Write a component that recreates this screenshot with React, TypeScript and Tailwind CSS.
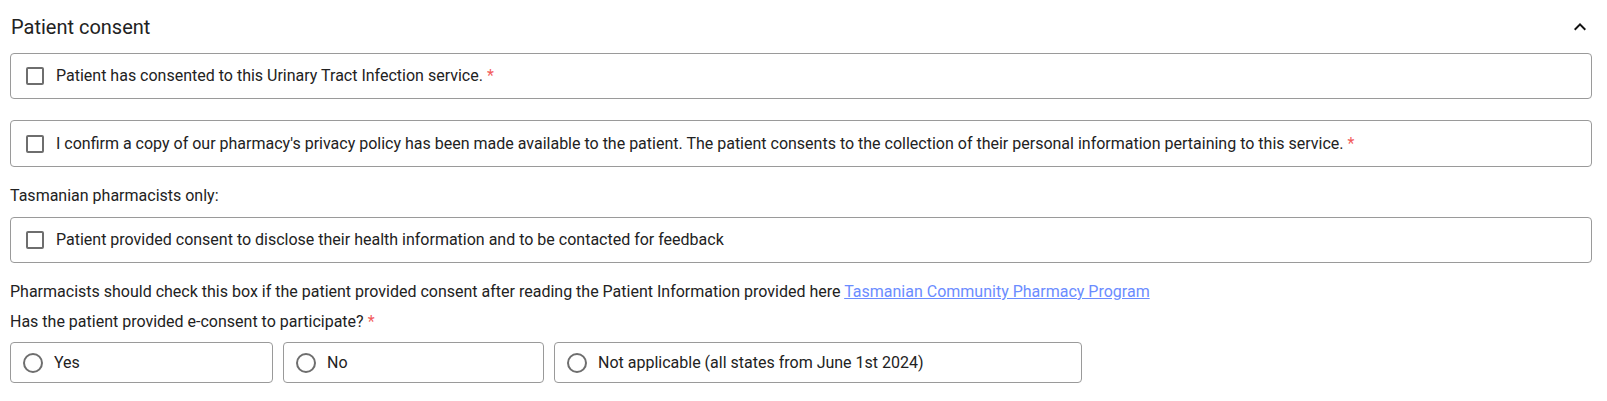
import React from 'react';

const font = { fontFamily: 'Roboto, "Liberation Sans", sans-serif' };

const Req = () => <span className="text-[#f25c5c] ml-[4px]">*</span>;

const CheckRow: React.FC<{ children: React.ReactNode; className?: string }> = ({ children, className }) => (
  <label className={`flex items-center h-[46px] border border-[#9a9a9a] rounded-[4px] pl-[15px] ${className || ''}`}>
    <span className="w-[18px] h-[18px] border-2 border-[#6e6e6e] rounded-[2px] shrink-0" />
    <span className="ml-[12px] text-[16px] text-[#222]">{children}</span>
  </label>
);

const RadioBox: React.FC<{ label: string; width: string }> = ({ label, width }) => (
  <label className={`flex items-center h-[41px] border border-[#9a9a9a] rounded-[4px] pl-[12px] ${width}`}>
    <span className="w-[20px] h-[20px] border-2 border-[#6e6e6e] rounded-full shrink-0" />
    <span className="ml-[11px] text-[16px] text-[#222]">{label}</span>
  </label>
);

export default function App() {
  return (
    <div className="w-[1607px] h-[401px] bg-white pl-[10px] pr-[15px]" style={font}>
      <div className="flex items-center justify-between h-[53px]">
        <h2 className="text-[20px] text-[#222] pl-[1px]">Patient consent</h2>
        <svg width="24" height="24" viewBox="0 0 24 24" className="text-[#111]">
          <path fill="currentColor" d="M12 8l-6 6 1.41 1.41L12 10.83l4.59 4.58L18 14z" />
        </svg>
      </div>

      <CheckRow>
        Patient has consented to this Urinary Tract Infection service.
        <Req />
      </CheckRow>

      <CheckRow className="mt-[21px] h-[47px]">
        I confirm a copy of our pharmacy's privacy policy has been made available to the patient. The patient consents to the collection of their personal information pertaining to this service.
        <Req />
      </CheckRow>

      <p className="mt-[19px] h-[20px] leading-[20px] text-[16px] text-[#222]">Tasmanian pharmacists only:</p>

      <CheckRow className="mt-[11px]">
        Patient provided consent to disclose their health information and to be contacted for feedback
      </CheckRow>

      <p className="mt-[19px] h-[20px] leading-[20px] text-[16px] text-[#222]">
        Pharmacists should check this box if the patient provided consent after reading the Patient Information provided here{' '}
        <a href="#" className="text-[#6b8cff] underline">Tasmanian Community Pharmacy Program</a>
      </p>
      <p className="mt-[10px] h-[20px] leading-[20px] text-[16px] text-[#222]">
        Has the patient provided e-consent to participate?
        <Req />
      </p>

      <div className="flex gap-[10px] mt-[10px]">
        <RadioBox label="Yes" width="w-[263px]" />
        <RadioBox label="No" width="w-[261px]" />
        <RadioBox label="Not applicable (all states from June 1st 2024)" width="w-[528px]" />
      </div>
    </div>
  );
}
